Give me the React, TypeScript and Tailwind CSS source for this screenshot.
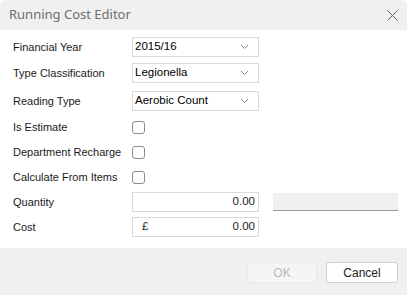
const ROWS_SELECT = [
  { label: 'Financial Year', value: '2015/16' },
  { label: 'Type Classification', value: 'Legionella' },
  { label: 'Reading Type', value: 'Aerobic Count' },
]

const ROWS_CHECK = ['Is Estimate', 'Department Recharge', 'Calculate From Items']

function Chevron() {
  return (
    <svg width="9" height="6" viewBox="0 0 9 6" className="text-[#8a8a8a]">
      <path d="M1 1l3.5 3.5L8 1" fill="none" stroke="currentColor" strokeWidth="1" />
    </svg>
  )
}

export default function App() {
  return (
    <div className="w-[407px] h-[295px] flex flex-col bg-white overflow-hidden rounded-tl-[6px] rounded-tr-[6px]" style={{ fontFamily: '"Liberation Sans", Arial, sans-serif' }}>
      <div className="h-[30px] bg-[#f0f0f0] flex items-center justify-between pl-[9px] pr-[9px]">
        <span className="text-[13px] text-[#6e6e6e]" style={{ fontFamily: '"Noto Sans", "Open Sans", sans-serif' }}>Running Cost Editor</span>
        <svg width="11" height="11" viewBox="0 0 11 11" className="text-[#666]">
          <path d="M0.5 0.5l10 10M10.5 0.5l-10 10" stroke="currentColor" strokeWidth="1" fill="none" />
        </svg>
      </div>
      <div className="flex-1 pt-[7px] text-[11px] text-[#1a1a1a]">
        {ROWS_SELECT.map((r, i) => (
          <div key={r.label} className={`flex items-center h-[20px] ${i === 0 ? '' : i === 1 ? 'mt-[6px]' : 'mt-[8px]'}`}>
            <span className="w-[132px] pl-[13px]">{r.label}</span>
            <div className="w-[127px] h-[20px] border border-[#dadada] flex items-center justify-between pl-[2px] pr-[9px]">
              <span className="text-[11.5px] text-black">{r.value}</span>
              <Chevron />
            </div>
          </div>
        ))}
        {ROWS_CHECK.map((c, i) => (
          <div key={c} className={`flex items-center h-[14px] ${i === 0 ? 'mt-[9px]' : 'mt-[11px]'}`}>
            <span className="w-[132px] pl-[13px]">{c}</span>
            <div className="w-[13px] h-[13px] border border-[#8c8c8c] rounded-[3px] bg-white" />
          </div>
        ))}
        <div className="flex items-center h-[20px] mt-[8px]">
          <span className="w-[132px] pl-[13px]">Quantity</span>
          <div className="w-[127px] h-[20px] border border-[#dadada] flex items-center justify-end pr-[3px] text-[11.5px]">0.00</div>
          <div className="ml-[14px] w-[125px] h-[18px] bg-[#f0f0f0] border-b border-[#9a9a9a]" />
        </div>
        <div className="flex items-center h-[20px] mt-[5px]">
          <span className="w-[132px] pl-[13px]">Cost</span>
          <div className="w-[127px] h-[20px] border border-[#dadada] flex items-center justify-between pl-[9px] pr-[3px] text-[11.5px]">
            <span>£</span>
            <span>0.00</span>
          </div>
        </div>
      </div>
      <div className="h-[47px] bg-[#f0f0f0] flex items-center justify-end gap-[9px] pr-[9px] pt-[2px] text-[12px]">
        <button className="w-[70px] h-[21px] bg-[#f5f5f5] border border-[#ebebeb] rounded-[3px] text-[#b8b8b8]">OK</button>
        <button className="w-[72px] h-[21px] bg-white border border-[#d0d0d0] rounded-[3px] text-[#1a1a1a]">Cancel</button>
      </div>
    </div>
  )
}
